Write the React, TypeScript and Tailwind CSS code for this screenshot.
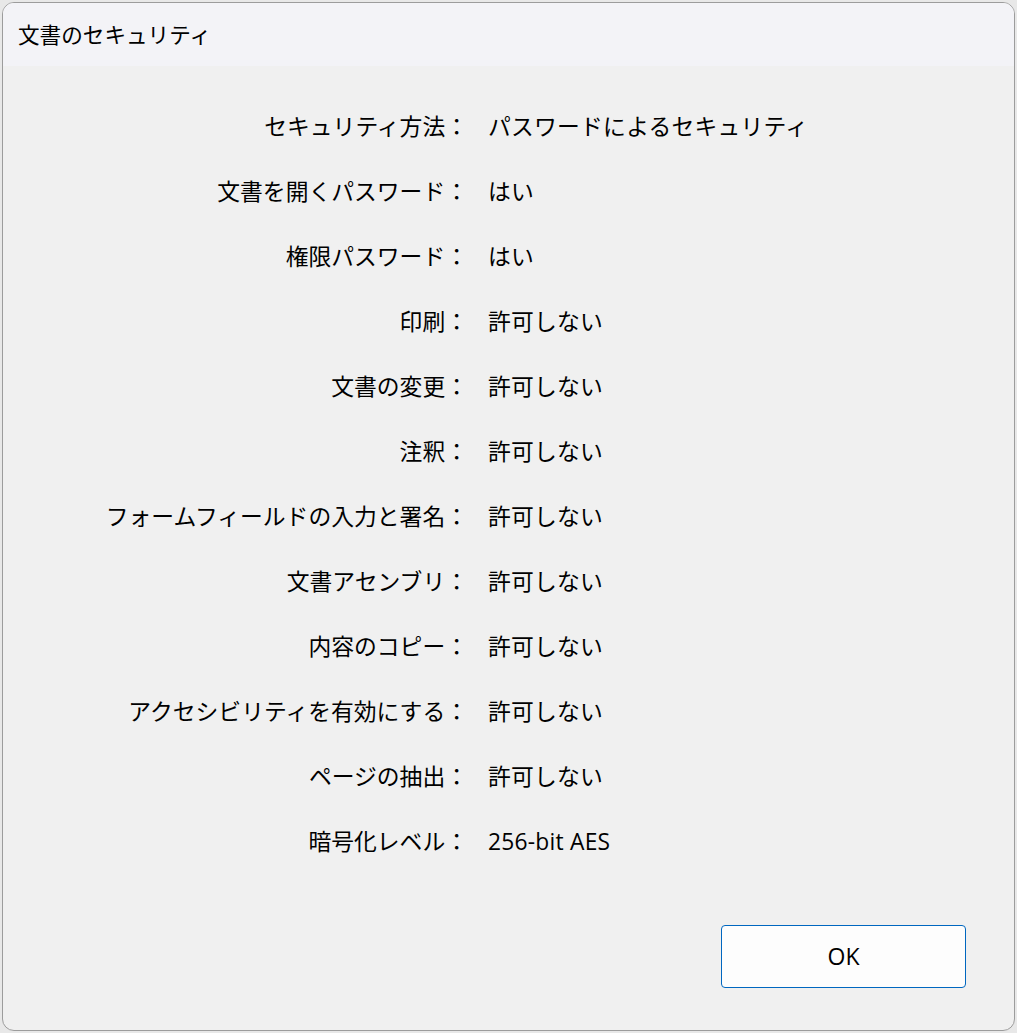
import React from 'react';

const rows: [string, string][] = [
  ['セキュリティ方法', 'パスワードによるセキュリティ'],
  ['文書を開くパスワード', 'はい'],
  ['権限パスワード', 'はい'],
  ['印刷', '許可しない'],
  ['文書の変更', '許可しない'],
  ['注釈', '許可しない'],
  ['フォームフィールドの入力と署名', '許可しない'],
  ['文書アセンブリ', '許可しない'],
  ['内容のコピー', '許可しない'],
  ['アクセシビリティを有効にする', '許可しない'],
  ['ページの抽出', '許可しない'],
  ['暗号化レベル', '256-bit AES'],
];

const App: React.FC = () => {
  return (
    <div
      className="w-[1017px] h-[1033px] bg-[#e8e8e8] p-[2px] text-black"
      style={{ fontFamily: '"Open Sans", "Noto Sans CJK JP", sans-serif' }}
    >
      <div className="h-full flex flex-col rounded-[12px] border border-[#9c9c9c] bg-[#f0f0f0] overflow-hidden">
        {/* Title bar */}
        <div className="h-[63px] shrink-0 bg-[#f3f3f7] flex items-center pl-[15px] text-[21.6px] leading-none">
          文書のセキュリティ
        </div>

        {/* Properties */}
        <div className="grid grid-cols-[465px_1fr] gap-x-[20px] pt-[29px] text-[22.8px] leading-none">
          {rows.map(([label, value]) => (
            <React.Fragment key={label}>
              <div className="h-[65px] flex items-center justify-end whitespace-nowrap">
                {label}：
              </div>
              <div className="h-[65px] flex items-center whitespace-nowrap">
                <span className="tracking-[0.01em]">{value}</span>
              </div>
            </React.Fragment>
          ))}
        </div>

        {/* Footer */}
        <div className="flex-1 flex items-end justify-end pr-[48px] pb-[42px]">
          <button className="w-[245px] h-[63px] rounded-[4px] border border-[#0067c0] bg-[#fdfdfd] text-[23px] leading-none">
            OK
          </button>
        </div>
      </div>
    </div>
  );
};

export default App;
